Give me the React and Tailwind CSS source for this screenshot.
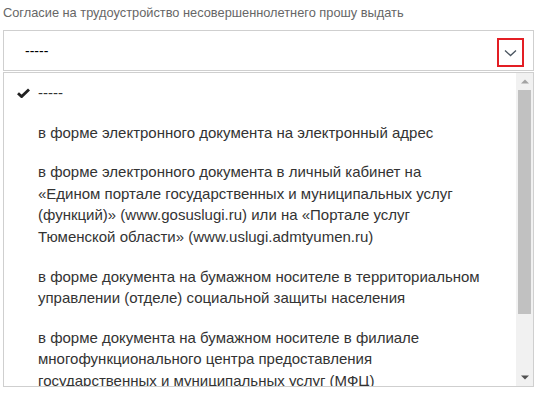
export default function App() {
  const items = [
    ["в форме электронного документа на электронный адрес"],
    [
      "в форме электронного документа в личный кабинет на",
      "«Едином портале государственных и муниципальных услуг",
      "(функций)» (www.gosuslugi.ru) или на «Портале услуг",
      "Тюменской области» (www.uslugi.admtyumen.ru)",
    ],
    [
      "в форме документа на бумажном носителе в территориальном",
      "управлении (отделе) социальной защиты населения",
    ],
    [
      "в форме документа на бумажном носителе в филиале",
      "многофункционального центра предоставления",
      "государственных и муниципальных услуг (МФЦ)",
    ],
  ];
  return (
    <div className="w-[547px] h-[402px] bg-white overflow-hidden font-['Liberation_Sans',Arial,sans-serif]">
      <div className="pl-[3px] pt-[5px] text-[12.8px] leading-[16px] text-[#666]">
        Согласие на трудоустройство несовершеннолетнего прошу выдать
      </div>
      <div className="mt-[9px] ml-[3px] w-[531px] h-[41px] border border-[#cfcfcf] flex items-start">
        <span className="self-center pl-[21px] text-[14px] leading-[16px] text-black">-----</span>
        <div className="ml-auto mr-[9px] mt-[7px] w-[27px] h-[29px] border-2 border-[#e31e24] flex items-center justify-center">
          <svg width="13" height="8" viewBox="0 0 13 8" fill="none">
            <path d="M1 1.5 L6.5 6.5 L12 1.5" stroke="#4a5560" strokeWidth="1.3" />
          </svg>
        </div>
      </div>
      <div className="mt-[1px] ml-[3px] w-[531px] h-[315px] border border-[#cfcfcf] bg-white flex overflow-hidden">
        <div className="flex-1 min-w-0 overflow-hidden text-[15px] leading-[21.6px] text-[#333]">
          <div className="flex pl-[13px] pr-[10px] py-[9px]">
            <div className="w-[21px] flex items-center">
              <svg width="13" height="10" viewBox="0 0 13 10">
                <path d="M1 5.2 L4.6 8.6 L12 1.4" stroke="#222" strokeWidth="2.8" fill="none" />
              </svg>
            </div>
            <span>-----</span>
          </div>
          {items.map((lines) => (
            <div key={lines[0]} className="pl-[34px] pr-[10px] py-[9px] whitespace-nowrap">
              {lines.map((l) => (
                <div key={l}>{l}</div>
              ))}
            </div>
          ))}
        </div>
        <div className="w-[17px] shrink-0 bg-[#f1f1f1] flex flex-col">
          <div className="h-[17px] flex items-center justify-center">
            <svg width="8" height="5" viewBox="0 0 8 5">
              <path d="M0 4.5 L4 0.5 L8 4.5 Z" fill="#a3a3a3" />
            </svg>
          </div>
          <div className="h-[224px] mx-[2px] bg-[#c1c1c1]" />
          <div className="flex-1" />
          <div className="h-[17px] flex items-center justify-center">
            <svg width="8" height="5" viewBox="0 0 8 5">
              <path d="M0 0.5 L8 0.5 L4 4.5 Z" fill="#505050" />
            </svg>
          </div>
        </div>
      </div>
    </div>
  );
}
